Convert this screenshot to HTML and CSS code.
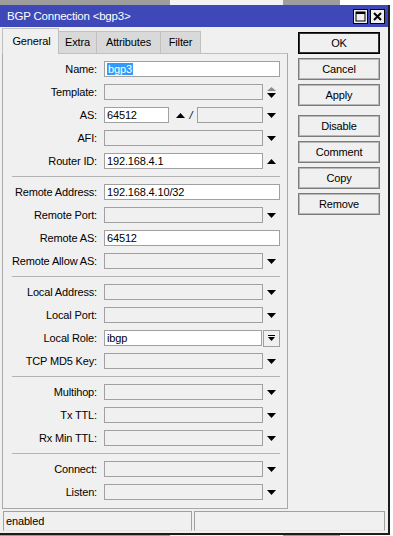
FILE: index.html
```html
<!DOCTYPE html>
<html lang="en">
<head>
  <meta charset="UTF-8">
  <meta name="viewport" content="width=device-width, initial-scale=1.0">
  <title>BGP Connection &lt;bgp3&gt;</title>
  <link rel="stylesheet" href="styles.css">
</head>
<body>
<div class="window">
  <div class="titlebar">
    <span class="title">BGP Connection &lt;bgp3&gt;</span>
    <div class="title-buttons">
      <span class="tbtn">
        <svg width="11" height="11" viewBox="0 0 11 11"><rect x="1" y="1" width="9" height="9" fill="none" stroke="#000" stroke-width="1"/><rect x="1" y="1" width="9" height="2" fill="#000"/></svg>
      </span>
      <span class="tbtn">
        <svg width="11" height="11" viewBox="0 0 11 11"><path d="M2 2 L9 9 M9 2 L2 9" stroke="#000" stroke-width="2"/></svg>
      </span>
    </div>
  </div>

  <div class="main">
    <div class="left">
      <div class="tabs">
        <span class="tab active">General</span>
        <span class="tab t-extra">Extra</span>
        <span class="tab t-attr">Attributes</span>
        <span class="tab t-filter">Filter</span>
      </div>
      <div class="panel">
        <div class="row">
          <span class="label">Name:</span>
          <div class="field"><span class="input filled"><span class="sel">bgp3</span></span></div>
        </div>
        <div class="row">
          <span class="label">Template:</span>
          <div class="field"><span class="input"></span><span class="arrow"><svg width="9" height="11" viewBox="0 0 9 11"><polygon points="0,4 9,4 4.5,0" fill="#8c8c8c"/><polygon points="0,6 9,6 4.5,11" fill="#000"/></svg></span></div>
        </div>
        <div class="row">
          <span class="label">AS:</span>
          <div class="field">
            <span class="input filled as-input">64512</span>
            <span class="up"><svg width="9" height="5" viewBox="0 0 9 5"><polygon points="0,5 9,5 4.5,0"/></svg></span>
            <span class="slash">/</span>
            <span class="input"></span>
            <span class="arrow"><svg width="9" height="5" viewBox="0 0 9 5"><polygon points="0,0 9,0 4.5,5"/></svg></span>
          </div>
        </div>
        <div class="row">
          <span class="label">AFI:</span>
          <div class="field"><span class="input"></span><span class="arrow"><svg width="9" height="5" viewBox="0 0 9 5"><polygon points="0,0 9,0 4.5,5"/></svg></span></div>
        </div>
        <div class="row">
          <span class="label">Router ID:</span>
          <div class="field"><span class="input filled">192.168.4.1</span><span class="arrow"><svg width="9" height="5" viewBox="0 0 9 5"><polygon points="0,5 9,5 4.5,0"/></svg></span></div>
        </div>

        <div class="sep"></div>

        <div class="row">
          <span class="label">Remote Address:</span>
          <div class="field"><span class="input filled">192.168.4.10/32</span></div>
        </div>
        <div class="row">
          <span class="label">Remote Port:</span>
          <div class="field"><span class="input"></span><span class="arrow"><svg width="9" height="5" viewBox="0 0 9 5"><polygon points="0,0 9,0 4.5,5"/></svg></span></div>
        </div>
        <div class="row">
          <span class="label">Remote AS:</span>
          <div class="field"><span class="input filled">64512</span></div>
        </div>
        <div class="row">
          <span class="label">Remote Allow AS:</span>
          <div class="field"><span class="input"></span><span class="arrow"><svg width="9" height="5" viewBox="0 0 9 5"><polygon points="0,0 9,0 4.5,5"/></svg></span></div>
        </div>

        <div class="sep"></div>

        <div class="row">
          <span class="label">Local Address:</span>
          <div class="field"><span class="input"></span><span class="arrow"><svg width="9" height="5" viewBox="0 0 9 5"><polygon points="0,0 9,0 4.5,5"/></svg></span></div>
        </div>
        <div class="row">
          <span class="label">Local Port:</span>
          <div class="field"><span class="input"></span><span class="arrow"><svg width="9" height="5" viewBox="0 0 9 5"><polygon points="0,0 9,0 4.5,5"/></svg></span></div>
        </div>
        <div class="row">
          <span class="label">Local Role:</span>
          <div class="field"><span class="input filled role-input">ibgp</span><span class="dropbtn"><svg width="7" height="7" viewBox="0 0 7 7"><rect x="0" y="0" width="7" height="1"/><polygon points="0,2 7,2 3.5,6"/></svg></span></div>
        </div>
        <div class="row">
          <span class="label">TCP MD5 Key:</span>
          <div class="field"><span class="input"></span><span class="arrow"><svg width="9" height="5" viewBox="0 0 9 5"><polygon points="0,0 9,0 4.5,5"/></svg></span></div>
        </div>

        <div class="sep"></div>

        <div class="row">
          <span class="label">Multihop:</span>
          <div class="field"><span class="input"></span><span class="arrow"><svg width="9" height="5" viewBox="0 0 9 5"><polygon points="0,0 9,0 4.5,5"/></svg></span></div>
        </div>
        <div class="row">
          <span class="label">Tx TTL:</span>
          <div class="field"><span class="input"></span><span class="arrow"><svg width="9" height="5" viewBox="0 0 9 5"><polygon points="0,0 9,0 4.5,5"/></svg></span></div>
        </div>
        <div class="row">
          <span class="label">Rx Min TTL:</span>
          <div class="field"><span class="input"></span><span class="arrow"><svg width="9" height="5" viewBox="0 0 9 5"><polygon points="0,0 9,0 4.5,5"/></svg></span></div>
        </div>

        <div class="sep"></div>

        <div class="row">
          <span class="label">Connect:</span>
          <div class="field"><span class="input"></span><span class="arrow"><svg width="9" height="5" viewBox="0 0 9 5"><polygon points="0,0 9,0 4.5,5"/></svg></span></div>
        </div>
        <div class="row">
          <span class="label">Listen:</span>
          <div class="field"><span class="input"></span><span class="arrow"><svg width="9" height="5" viewBox="0 0 9 5"><polygon points="0,0 9,0 4.5,5"/></svg></span></div>
        </div>
      </div>
    </div>

    <div class="buttons">
      <span class="btn default">OK</span>
      <span class="btn">Cancel</span>
      <span class="btn">Apply</span>
      <span class="btn spaced">Disable</span>
      <span class="btn">Comment</span>
      <span class="btn">Copy</span>
      <span class="btn">Remove</span>
    </div>
  </div>

  <div class="statusbar">
    <span class="status first">enabled</span>
    <span class="status second"></span>
  </div>
</div>
</body>
</html>
```

FILE: styles.css
```css
* {
  box-sizing: border-box;
}
body {
  margin: 0;
  height: 536px;
  overflow: hidden;
  font-family: "Liberation Sans", Arial, sans-serif;
  font-size: 11px;
  letter-spacing: -0.15px;
  color: #000;
  background: linear-gradient(to right, #9d9d9d 0, #9d9d9d 170px, #f2f2f2 170px, #f2f2f2 283px, #9d9d9d 283px, #9d9d9d 340px, #fff 340px);
}
.window {
  margin-top: 5px;
  width: 390px;
  background: #f0f0f0;
  border-right: 2px solid #1c1c1c;
  border-bottom: 2px solid #1c1c1c;
}

/* title bar */
.titlebar {
  height: 22px;
  background: #3f48b8;
  color: #fff;
  display: flex;
  align-items: center;
  justify-content: space-between;
  padding-left: 7px;
}
.title {
  font-size: 11.5px;
  letter-spacing: -0.2px;
}
.title-buttons {
  display: flex;
  gap: 2px;
  margin-right: 3px;
}
.tbtn {
  width: 15px;
  height: 15px;
  background: #f0f0f0;
  border: 1px solid #000;
  display: flex;
  align-items: center;
  justify-content: center;
}

/* main area */
.main {
  display: flex;
  padding-top: 1px;
}
.left {
  margin-left: 2px;
  width: 286px;
}
.tabs {
  display: flex;
  align-items: flex-end;
  height: 25px;
}
.tab {
  height: 22px;
  line-height: 20px;
  text-align: center;
  background: #d9d9d9;
  border: 1px solid #c0c0c0;
  border-left: none;
  border-bottom: none;
}
.tab.active {
  width: 57px;
  height: 26px;
  line-height: 24px;
  margin-bottom: -1px;
  padding-left: 2px;
  background: #f0f0f0;
  border-left: 1px solid #c0c0c0;
  position: relative;
  z-index: 1;
}
.t-extra { width: 38px; }
.t-attr { width: 64px; }
.t-filter { width: 40px; }

.panel {
  border: 1px solid #a9a9a9;
  border-top-color: #c0c0c0;
  padding: 7px 7px 8px 0;
  display: flex;
  flex-direction: column;
  gap: 7px;
}
.row {
  display: grid;
  grid-template-columns: 94px 176px;
  column-gap: 7px;
  height: 16px;
  align-items: center;
}
.label {
  text-align: right;
  white-space: nowrap;
}
.field {
  display: flex;
  align-items: center;
  height: 16px;
}
.input {
  flex: 1;
  height: 16px;
  border: 1px solid #a0a0a0;
  background: #f0f0f0;
  padding-left: 2px;
  line-height: 14px;
  white-space: nowrap;
}
.input.filled {
  background: #fff;
}
.sel {
  background: #3399ff;
  color: #fff;
  padding: 0 1px;
}
.arrow {
  width: 17px;
  display: flex;
  justify-content: center;
  align-items: center;
}
.as-input {
  flex: 0 0 65px;
}
.up {
  margin-left: 7px;
  width: 9px;
  display: flex;
}
.slash {
  width: 12px;
  text-align: center;
  font-style: italic;
}
.role-input {
  flex: 0 0 158px;
}
.dropbtn {
  margin-left: 1px;
  width: 17px;
  height: 17px;
  border: 1px solid #a0a0a0;
  background: #f0f0f0;
  display: flex;
  align-items: center;
  justify-content: center;
}
.sep {
  height: 1px;
  margin-left: 9px;
  width: 268px;
  background: #b4b4b4;
}

/* right buttons */
.buttons {
  margin-left: 10px;
  padding-top: 4px;
  display: flex;
  flex-direction: column;
  gap: 4px;
}
.btn {
  width: 82px;
  height: 22px;
  line-height: 20px;
  text-align: center;
  border: 1px solid #7c7c7c;
  box-shadow: inset 0 0 0 1px #b8b8b8;
  background: #f0f0f0;
}
.btn.default {
  border-color: #000;
  box-shadow: inset 0 0 0 1px #333;
}
.btn.spaced {
  margin-top: 5px;
}

/* status bar */
.statusbar {
  display: flex;
  gap: 2px;
  padding: 2px 3px 2px 3px;
}
.status {
  height: 20px;
  line-height: 18px;
  border: 1px solid #a0a0a0;
  border-bottom-color: #e6e6e6;
  padding-left: 2px;
}
.status.first {
  width: 189px;
}
.status.second {
  flex: 1;
}
```
